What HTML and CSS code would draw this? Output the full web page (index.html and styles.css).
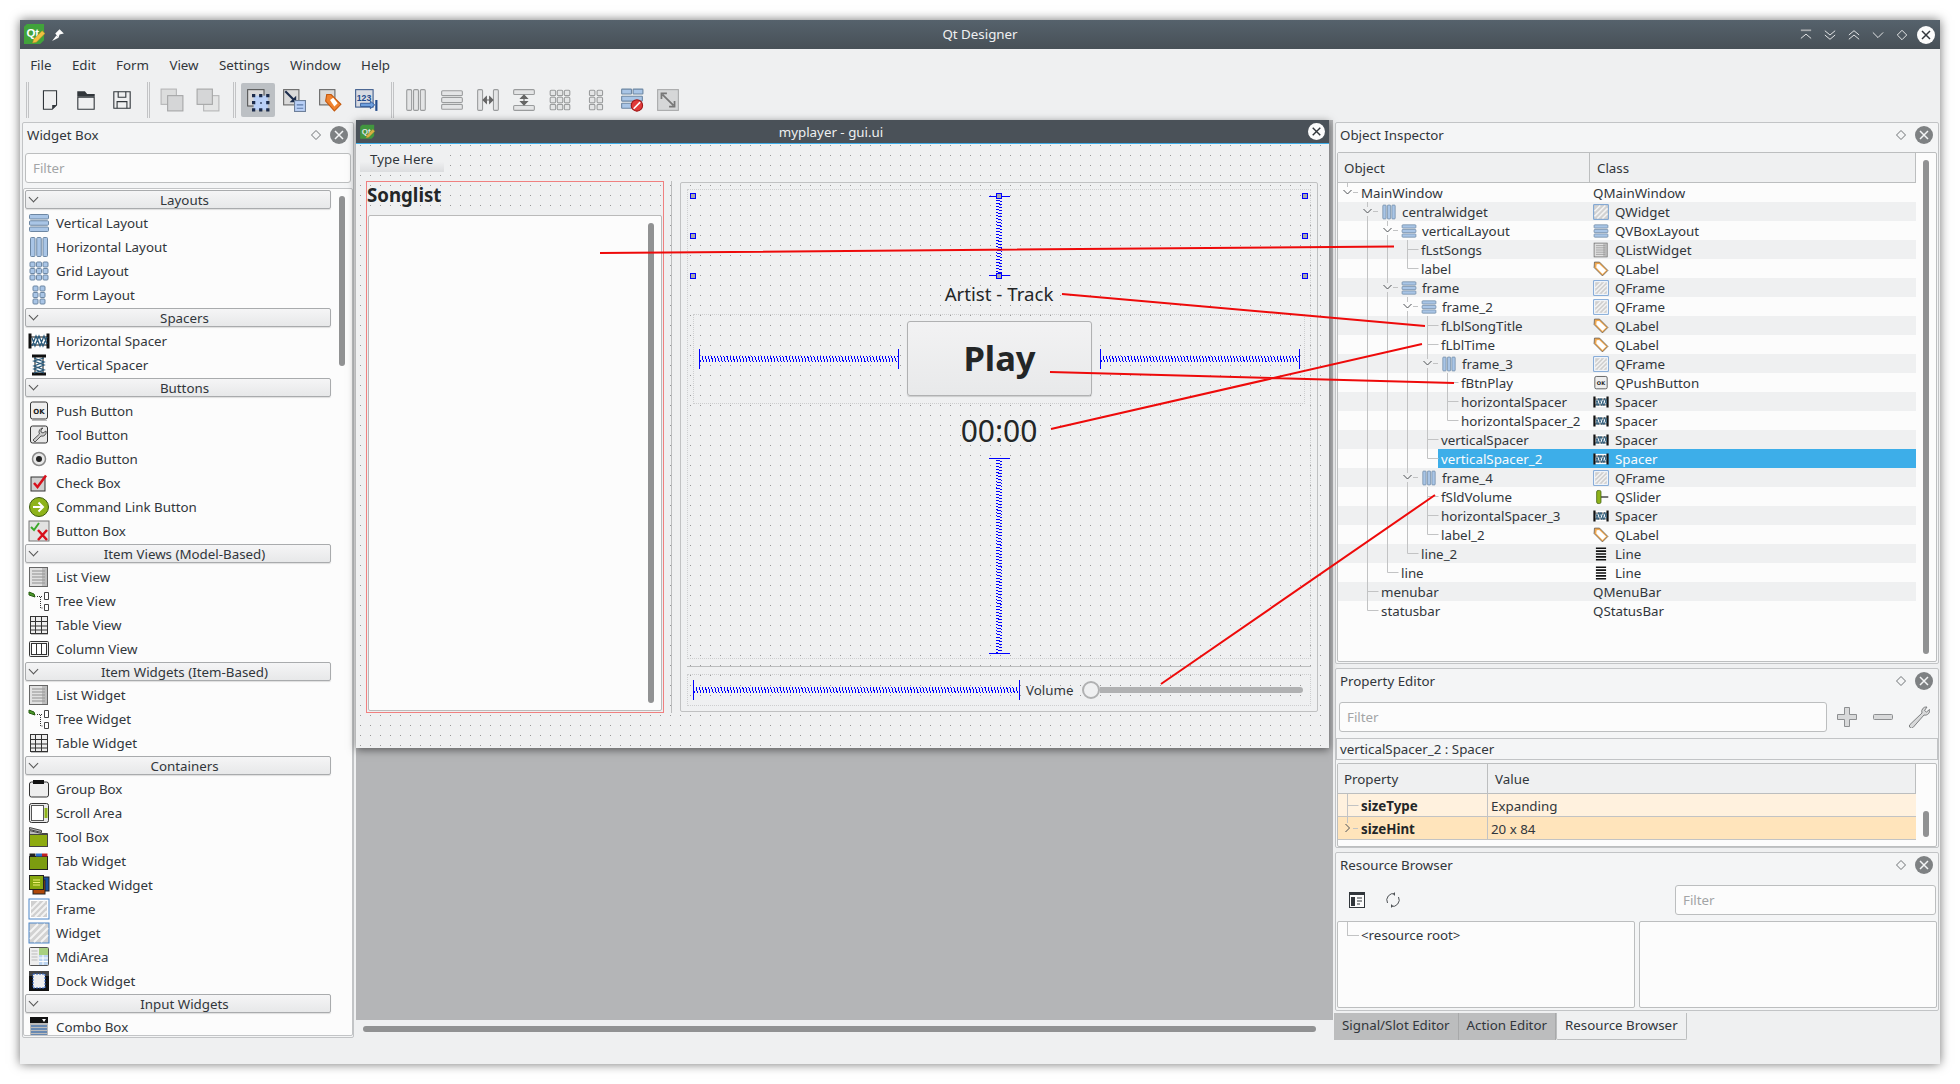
FILE: index.html
```html
<!DOCTYPE html>
<html lang="en">

<head>
    <meta charset="UTF-8">
    <title>Qt Designer</title>
    <link rel="stylesheet" href="styles.css">
</head>

<body>
    <svg class="defs" width="0" height="0">
        <symbol id="i-hbox" viewBox="0 0 22 22"><rect class="lay" x="2.5" y="1.5" width="4.5" height="19" rx="1"/><rect class="lay" x="8.75" y="1.5" width="4.5" height="19" rx="1"/><rect class="lay" x="15" y="1.5" width="4.5" height="19" rx="1"/></symbol>
        <symbol id="i-vbox" viewBox="0 0 22 22"><rect class="lay" x="1.5" y="2.5" width="19" height="4.5" rx="1"/><rect class="lay" x="1.5" y="8.75" width="19" height="4.5" rx="1"/><rect class="lay" x="1.5" y="15" width="19" height="4.5" rx="1"/></symbol>
        <symbol id="i-grid" viewBox="0 0 22 22"><rect class="lay" x="2" y="2" width="5" height="5" rx="1"/><rect class="lay" x="8.5" y="2" width="5" height="5" rx="1"/><rect class="lay" x="15" y="2" width="5" height="5" rx="1"/><rect class="lay" x="2" y="8.5" width="5" height="5" rx="1"/><rect class="lay" x="8.5" y="8.5" width="5" height="5" rx="1"/><rect class="lay" x="15" y="8.5" width="5" height="5" rx="1"/><rect class="lay" x="2" y="15" width="5" height="5" rx="1"/><rect class="lay" x="8.5" y="15" width="5" height="5" rx="1"/><rect class="lay" x="15" y="15" width="5" height="5" rx="1"/></symbol>
        <symbol id="i-form" viewBox="0 0 22 22"><rect class="lay" x="5" y="2" width="5" height="5" rx="1"/><rect class="lay" x="12" y="2" width="5" height="5" rx="1"/><rect class="lay" x="5" y="8.5" width="5" height="5" rx="1"/><rect class="lay" x="12" y="8.5" width="5" height="5" rx="1"/><rect class="lay" x="5" y="15" width="5" height="5" rx="1"/><rect class="lay" x="12" y="15" width="5" height="5" rx="1"/></symbol>
        <symbol id="i-hsplit" viewBox="0 0 22 22"><rect class="lay" x="1.5" y="1.5" width="4.5" height="19" rx="1"/><rect class="lay" x="16" y="1.5" width="4.5" height="19" rx="1"/><path d="M7 11h8M9.5 8l-3 3 3 3zM12.5 8l3 3-3 3z" fill="#666" stroke="#666"/></symbol>
        <symbol id="i-vsplit" viewBox="0 0 22 22"><rect class="lay" x="1.5" y="1.5" width="19" height="4.5" rx="1"/><rect class="lay" x="1.5" y="16" width="19" height="4.5" rx="1"/><path d="M11 7v8M8 9.5l3-3 3 3zM8 12.5l3 3 3-3z" fill="#666" stroke="#666"/></symbol>
        <symbol id="i-break" viewBox="0 0 22 22"><rect class="lay" x="1.5" y="1" width="9" height="4.5" rx=".5"/><rect class="lay" x="12" y="1" width="9" height="4.5" rx=".5"/><rect class="lay" x="1.5" y="7.5" width="19" height="4.5" rx=".5"/><rect class="lay" x="1.5" y="14" width="9" height="4.5" rx=".5"/><circle cx="15.5" cy="16" r="5.2" fill="#e03a3a" stroke="#a01818"/><path d="M12.5 19l6-6" stroke="#fff" stroke-width="1.5"/></symbol>
        <symbol id="i-adjust" viewBox="0 0 22 22"><rect x="1.5" y="1.5" width="19" height="19" fill="#d6d7d8" stroke="#a8a9aa"/><path d="M6 6l10 10M5 10V5h5M17 12v5h-5" fill="none" stroke="#777" stroke-width="1.6"/></symbol>
        <symbol id="i-new" viewBox="0 0 22 22"><path d="M5 2.5h12v13l-4 4H5z" fill="#eff0f1" stroke="#31363b"/><path d="M13 19.5v-4h4z" fill="#31363b"/></symbol>
        <symbol id="i-open" viewBox="0 0 22 22"><path d="M3.5 8.5h15v11h-15z" fill="#eff0f1" stroke="#31363b"/><path d="M3 3h7l2 2.500h7V8H3z" fill="#31363b"/></symbol>
        <symbol id="i-save" viewBox="0 0 22 22"><path d="M3.500 3.500h15v15h-15z" fill="none" stroke="#31363b"/><path d="M7.500 3.500v5h7v-5M6.500 18.500v-6h9v6" fill="none" stroke="#31363b"/></symbol>
        <symbol id="i-copy" viewBox="0 0 22 22"><rect x="1" y="1" width="14" height="14" fill="#dcdddd" stroke="#b5b6b7"/><rect x="7" y="7" width="14" height="14" fill="#d5d6d7" stroke="#a5a6a7"/></symbol>
        <symbol id="i-paste" viewBox="0 0 22 22"><rect x="7" y="7" width="14" height="14" fill="#e4e5e5" stroke="#b5b6b7"/><rect x="1" y="1" width="14" height="14" fill="#d5d6d7" stroke="#a5a6a7"/></symbol>
        <symbol id="i-widgets" viewBox="0 0 22 22"><rect x="1.500" y="1.500" width="15" height="15" fill="#dadada" stroke="#555"/><rect x="7" y="7" width="13" height="13" fill="#b9d0f7"/><path d="M5.500 5.500h3v3h-3zM12 5.500h3v3h-3zM18.500 5.500h3v3h-3zM5.500 12h3v3h-3zM18.500 12h3v3h-3zM5.500 18.500h3v3h-3zM12 18.500h3v3h-3zM18.500 18.500h3v3h-3zM13 13h1.500v1.500H13z" fill="#1c2c4c"/></symbol>
        <symbol id="i-signals" viewBox="0 0 22 22"><rect x="1.500" y="1.500" width="14" height="14" fill="#dadada" stroke="#666"/><path d="M3 3l8 8" stroke="#1c2c4c" stroke-width="2"/><path d="M13 7v6H7z" fill="#1c2c4c"/><rect x="11.500" y="11.500" width="10" height="10" fill="#b9d0f7" stroke="#6d7f99"/><path d="M13.500 15.500h6M13.500 18.500h6" stroke="#5d7aa8"/></symbol>
        <symbol id="i-buddy" viewBox="0 0 22 22"><rect x="1.500" y="1.500" width="14" height="14" fill="#dadada" stroke="#666"/><path d="M8 6h4l9 9-6 6-8-9z" fill="#f0822e" stroke="#c45a10"/><path d="M11 11l3-2 4 5-3 3z" fill="#fff"/></symbol>
        <symbol id="i-hspacer" viewBox="0 0 22 22"><rect x="1" y="4" width="20" height="14" fill="#fff"/><path d="M2 3.500v15M20 3.500v15" stroke="#111" stroke-width="3"/><path d="M3 7h16M3 15h16" stroke="#111" stroke-width="1"/><path d="M4 16l4-10 4 10 4-10 3 8M4 8l3 8 4-10 4 10 4-9" fill="none" stroke="#2a5a7a" stroke-width="1.300"/></symbol>
        <symbol id="i-vspacer" viewBox="0 0 22 22"><rect x="5" y="1" width="12" height="20" fill="#fff"/><path d="M4 2h14M4 20h14" stroke="#111" stroke-width="3"/><path d="M7 3v16M15 3v16" stroke="#111"/><path d="M6 4l10 4-10 4 10 4-10 3M16 4L6 7l10 4-10 4 10 4" fill="none" stroke="#2a5a7a" stroke-width="1.300"/></symbol>
        <symbol id="i-tool" viewBox="0 0 22 22"><rect x="2.500" y="2" width="17" height="17" rx="2" fill="#e8e8e8" stroke="#333"/><path d="M15 4a4 4 0 0 0-3.500 6L5 16l2 2 6-6a4 4 0 0 0 5-5l-3 2-2-1v-2z" fill="#ccc" stroke="#555"/></symbol>
        <symbol id="i-radio" viewBox="0 0 22 22"><circle cx="11" cy="11" r="6.500" fill="#e8e8e8" stroke="#888" stroke-width="1.500"/><circle cx="11" cy="11" r="3" fill="#222"/></symbol>
        <symbol id="i-check" viewBox="0 0 22 22"><rect x="3" y="5" width="14" height="14" fill="#d0d0d0" stroke="#333"/><path d="M6 11l3.500 4L18 3.500" fill="none" stroke="#d8101c" stroke-width="2.500"/></symbol>
        <symbol id="i-cmdlink" viewBox="0 0 22 22"><circle cx="11" cy="11" r="9.500" fill="#8eb31a" stroke="#3d5c0c"/><path d="M5 11h9M10.500 6.500l4.500 4.500-4.500 4.500" fill="none" stroke="#fff" stroke-width="2"/></symbol>
        <symbol id="i-boxbtn" viewBox="0 0 22 22"><rect x="1" y="1" width="20" height="20" fill="#e2e2e2" stroke="#777"/><path d="M3 7l3 3 5-7" fill="none" stroke="#3ba82a" stroke-width="2"/><path d="M10 10l9 10M19 10l-9 10" stroke="#d8101c" stroke-width="2.500"/></symbol>
        <symbol id="i-list" viewBox="0 0 22 22"><rect x="1.500" y="1.500" width="18" height="19" fill="#e0e0e0" stroke="#666"/><path d="M4 5h13M4 8h13M4 11h13M4 14h13M4 17h13" stroke="#909090"/><path d="M14 2v18h5V2z" fill="#999" opacity=".5"/></symbol>
        <symbol id="i-tree" viewBox="0 0 22 22"><path d="M1 2l5 2 1 3-6-2z" fill="#4c9a2a" stroke="#245a10"/><path d="M9 6.500h6M12.500 7v11h3" fill="none" stroke="#333" stroke-dasharray="1 1"/><path d="M16.500 2.500h4v7h-4zM16.500 14.500h4v6h-4z" fill="#fff" stroke="#444"/></symbol>
        <symbol id="i-table" viewBox="0 0 22 22"><rect x="2.500" y="2.500" width="17" height="17" fill="#eee" stroke="#333"/><path d="M2.500 7.500h17M2.500 12h17M2.500 16h17M7.500 2.500v17M13.500 2.500v17" stroke="#333"/><path d="M3 20.500h17" stroke="#bbb"/></symbol>
        <symbol id="i-column" viewBox="0 0 22 22"><rect x="1.500" y="3.500" width="19" height="15" rx="1" fill="#eee" stroke="#333"/><rect x="3.500" y="5.500" width="15" height="11" fill="#fff" stroke="#333"/><path d="M8.500 5.500v11M13.500 5.500v11" stroke="#333"/></symbol>
        <symbol id="i-group" viewBox="0 0 22 22"><rect x="1.500" y="4" width="19" height="15" rx="2" fill="#eee" stroke="#333"/><rect x="5" y="2" width="11" height="4" fill="#111"/></symbol>
        <symbol id="i-scroll" viewBox="0 0 22 22"><rect x="1.500" y="1.500" width="19" height="19" rx="2" fill="#e8e8e8" stroke="#333"/><rect x="3.500" y="3.500" width="12" height="15" fill="#fff" stroke="#555"/><path d="M18 6v10" stroke="#8eb31a" stroke-width="3"/></symbol>
        <symbol id="i-toolbox" viewBox="0 0 22 22"><path d="M1.500 1.500l12 3v2l-12-3z" fill="#bbb" stroke="#444"/><path d="M1.500 4.500l12 3h6v3h-18z" fill="#bbb" stroke="#444"/><rect x="1.500" y="8.500" width="18" height="12" fill="#8eab10" stroke="#444"/></symbol>
        <symbol id="i-tab" viewBox="0 0 22 22"><rect x="1.500" y="6.500" width="18" height="13" fill="#7c9c10" stroke="#222"/><path d="M1.500 3.500h6v3h-6z" fill="#222"/><path d="M8 3.500h6v3H8z" fill="#2a70c8"/><path d="M14 3.500h5.500v3H14z" fill="#c02020"/></symbol>
        <symbol id="i-stacked" viewBox="0 0 22 22"><rect x="10" y="3" width="11" height="14" fill="#1a50a0" stroke="#222"/><rect x="5" y="6" width="12" height="14" fill="#b04808" stroke="#222"/><rect x="1.500" y="1.500" width="14" height="14" fill="#86a810" stroke="#222"/><path d="M5 6h7M5 8.500h7M5 11h7" stroke="#eef070"/></symbol>
        <symbol id="i-frame" viewBox="0 0 22 22"><rect x="1" y="1" width="20" height="20" fill="#fff" stroke="#4d86c8" stroke-width="1"/><rect x="3" y="3" width="16" height="16" fill="#cfcfcf"/><path d="M3 11l8-8M3 17l14-14M7 19l12-12M13 19l6-6" stroke="#f2f2f2" stroke-width="2"/></symbol>
        <symbol id="i-widget" viewBox="0 0 22 22"><rect x="1" y="1" width="20" height="20" fill="#d2d2d2" stroke="#4d86c8" stroke-width="1"/><path d="M2 10l8-8M2 17l15-15M6 20l14-14M13 20l7-7" stroke="#f4f4f4" stroke-width="2"/></symbol>
        <symbol id="i-mdi" viewBox="0 0 22 22"><rect x="1.500" y="1.500" width="19" height="18" rx="1" fill="#eee" stroke="#555"/><rect x="11" y="2" width="9" height="7" fill="#a8d080"/><rect x="11" y="9" width="9" height="10" fill="#bcd4f0"/><path d="M11 12h9M11 15.500h9M15 9v10" stroke="#fff"/><path d="M3.500 5h6M3.500 8h6M3.500 11h6M3.500 14h6" stroke="#bbb"/></symbol>
        <symbol id="i-dock" viewBox="0 0 22 22"><rect x="1" y="1" width="20" height="20" fill="#111"/><rect x="1" y="1" width="20" height="5" fill="#444"/><rect x="5" y="4" width="12" height="14" fill="#eee" stroke="#2a60c0" stroke-dasharray="2 1"/></symbol>
        <symbol id="i-combo" viewBox="0 0 22 22"><rect x="2" y="1" width="18" height="21" fill="#bbb"/><rect x="2" y="1" width="18" height="6" fill="#111"/><path d="M14 3h4l-2 3z" fill="#fff"/><path d="M3 10h16M3 13h16M3 16h16M3 19h16" stroke="#4d7ab0" stroke-width="1.500"/></symbol>
        <symbol id="i-tag" viewBox="0 0 22 22"><path d="M2 1.500h7L20.500 13 13 20.500 1.500 9z" fill="#f0a850" stroke="#555"/><path d="M5 4.500l3.500-.5 9.500 9-5 5-8.500-9z" fill="#fff"/></symbol>
        <symbol id="i-slider" viewBox="0 0 22 22"><path d="M10 11h11" stroke="#444" stroke-width="2"/><rect x="5" y="2" width="6" height="18" rx="2" fill="#8eb31a" stroke="#3d5c0c"/></symbol>
        <symbol id="i-line" viewBox="0 0 22 22"><path d="M4 3h14M4 7h14M4 11h14M4 15h14M4 19h14" stroke="#111" stroke-width="2.200"/></symbol>
        <symbol id="i-wrench" viewBox="0 0 22 22"><path d="M19 1a4.500 4.500 0 0 0-5 6L2 18.500a2 2 0 0 0 3 3L16 9a4.500 4.500 0 0 0 5.500-5.500L18.500 6l-2-1.500z" fill="#d8d9da" stroke="#7d7f81"/></symbol>
        <symbol id="i-diamond" viewBox="0 0 12 12"><path d="M6 1.500L10.500 6 6 10.500 1.500 6z" fill="none" stroke="currentColor"/></symbol>
        <symbol id="i-close" viewBox="0 0 18 18"><circle cx="9" cy="9" r="9" fill="currentColor"/><path d="M5 5l8 8M13 5l-8 8" stroke="var(--x)" stroke-width="1.500"/></symbol>
    </svg>

    <div class="window">
        <div class="titlebar">
            <div class="tb-left">
                <svg class="qt-logo" viewBox="0 0 22 24"><path d="M3 1h18v17l-4 4H0V4z" fill="#41a33b"/><text class="ic-qt" x="2.500" y="14.500">Qt</text><path d="M9 21l1-4 9-9 3 3-9 9z" fill="#f0c040" stroke="#b08020" stroke-width=".5"/></svg>
                <svg class="pin" viewBox="0 0 14 14"><path d="M1 13l4-5 2 2zM4 6l4-4 4 4-4 1-1 3z" fill="#fcfcfc"/></svg>
            </div>
            <div class="tb-title">Qt Designer</div>
            <div class="tb-right">
                <svg class="wbtn" viewBox="0 0 14 14"><path d="M1 1.500h12" stroke="#a8abae" stroke-width="2"/><path d="M1 11l6-5 6 5" fill="none" stroke="#fcfcfc"/></svg>
                <svg class="wbtn" viewBox="0 0 14 14"><path d="M1 2l6 5 6-5M1 7l6 5 6-5" fill="none" stroke="#fcfcfc"/></svg>
                <svg class="wbtn" viewBox="0 0 14 14"><path d="M1 7l6-5 6 5M1 12l6-5 6 5" fill="none" stroke="#fcfcfc"/></svg>
                <svg class="wbtn" viewBox="0 0 14 14"><path d="M1 4l6 6 6-6" fill="none" stroke="#fcfcfc"/></svg>
                <svg class="wbtn" viewBox="0 0 14 14"><path d="M7 1.500L12.500 7 7 12.500 1.500 7z" fill="none" stroke="#fcfcfc"/></svg>
                <div class="wbtn-close"><svg class="close-white"><use href="#i-close"/></svg></div>
            </div>
        </div>

        <div class="menubar">
            <span>File</span><span>Edit</span><span>Form</span><span>View</span><span>Settings</span><span>Window</span><span>Help</span>
        </div>

        <div class="toolbar">
            <i class="tsep"></i>
            <div class="tbtn"><svg><use href="#i-new"/></svg></div>
            <div class="tbtn"><svg><use href="#i-open"/></svg></div>
            <div class="tbtn"><svg><use href="#i-save"/></svg></div>
            <i class="tsep"></i>
            <div class="tbtn"><svg><use href="#i-copy"/></svg></div>
            <div class="tbtn"><svg><use href="#i-paste"/></svg></div>
            <i class="tsep"></i>
            <div class="tbtn active"><svg><use href="#i-widgets"/></svg></div>
            <div class="tbtn"><svg><use href="#i-signals"/></svg></div>
            <div class="tbtn"><svg><use href="#i-buddy"/></svg></div>
            <div class="tbtn"><svg viewBox="0 0 22 22"><rect x="1.500" y="1.500" width="16" height="16" fill="#d8dbe2" stroke="#3e5c8c"/><text class="ic-text" x="2.500" y="11.500">123</text><path d="M6 14h9v-2l4 3.500-4 3.500v-2H6z" fill="#6fa0de" stroke="#234c8c" stroke-width=".7"/><path d="M20.500 11v10" stroke="#234c8c" stroke-width="2"/></svg></div>
            <i class="tsep"></i>
            <div class="tbtn grey"><svg><use href="#i-hbox"/></svg></div>
            <div class="tbtn grey"><svg><use href="#i-vbox"/></svg></div>
            <div class="tbtn grey"><svg><use href="#i-hsplit"/></svg></div>
            <div class="tbtn grey"><svg><use href="#i-vsplit"/></svg></div>
            <div class="tbtn grey"><svg><use href="#i-grid"/></svg></div>
            <div class="tbtn grey"><svg><use href="#i-form"/></svg></div>
            <div class="tbtn blue"><svg><use href="#i-break"/></svg></div>
            <div class="tbtn"><svg><use href="#i-adjust"/></svg></div>
        </div>

        <div class="main">
            <!-- Widget Box -->
            <div class="left-col">
                <div class="dock dock-widgets">
                    <div class="dock-title"><span>Widget Box</span><svg class="diamond"><use href="#i-diamond"/></svg><svg class="dock-close"><use href="#i-close"/></svg></div>
                    <input class="filter filter-box" placeholder="Filter">
                    <div class="toolbox">
                        <div class="toolbox-main">
                            <div class="tb-head">Layouts</div>
                            <div class="tb-group blue">
                                <div class="tb-item"><svg><use href="#i-vbox"/></svg>Vertical Layout</div>
                                <div class="tb-item"><svg><use href="#i-hbox"/></svg>Horizontal Layout</div>
                                <div class="tb-item"><svg><use href="#i-grid"/></svg>Grid Layout</div>
                                <div class="tb-item"><svg><use href="#i-form"/></svg>Form Layout</div>
                            </div>
                            <div class="tb-head">Spacers</div>
                            <div class="tb-group">
                                <div class="tb-item"><svg><use href="#i-hspacer"/></svg>Horizontal Spacer</div>
                                <div class="tb-item"><svg><use href="#i-vspacer"/></svg>Vertical Spacer</div>
                            </div>
                            <div class="tb-head">Buttons</div>
                            <div class="tb-group">
                                <div class="tb-item"><svg viewBox="0 0 22 22"><rect x="2.500" y="2" width="17" height="17" rx="2" fill="#eee" stroke="#333"/><path d="M4 20.500h15" stroke="#bbb"/><text class="ic-ok" x="11" y="13.500">OK</text></svg>Push Button</div>
                                <div class="tb-item"><svg><use href="#i-tool"/></svg>Tool Button</div>
                                <div class="tb-item"><svg><use href="#i-radio"/></svg>Radio Button</div>
                                <div class="tb-item"><svg><use href="#i-check"/></svg>Check Box</div>
                                <div class="tb-item"><svg><use href="#i-cmdlink"/></svg>Command Link Button</div>
                                <div class="tb-item"><svg><use href="#i-boxbtn"/></svg>Button Box</div>
                            </div>
                            <div class="tb-head">Item Views (Model-Based)</div>
                            <div class="tb-group">
                                <div class="tb-item"><svg><use href="#i-list"/></svg>List View</div>
                                <div class="tb-item"><svg><use href="#i-tree"/></svg>Tree View</div>
                                <div class="tb-item"><svg><use href="#i-table"/></svg>Table View</div>
                                <div class="tb-item"><svg><use href="#i-column"/></svg>Column View</div>
                            </div>
                            <div class="tb-head">Item Widgets (Item-Based)</div>
                            <div class="tb-group">
                                <div class="tb-item"><svg><use href="#i-list"/></svg>List Widget</div>
                                <div class="tb-item"><svg><use href="#i-tree"/></svg>Tree Widget</div>
                                <div class="tb-item"><svg><use href="#i-table"/></svg>Table Widget</div>
                            </div>
                            <div class="tb-head">Containers</div>
                            <div class="tb-group">
                                <div class="tb-item"><svg><use href="#i-group"/></svg>Group Box</div>
                                <div class="tb-item"><svg><use href="#i-scroll"/></svg>Scroll Area</div>
                                <div class="tb-item"><svg><use href="#i-toolbox"/></svg>Tool Box</div>
                                <div class="tb-item"><svg><use href="#i-tab"/></svg>Tab Widget</div>
                                <div class="tb-item"><svg><use href="#i-stacked"/></svg>Stacked Widget</div>
                                <div class="tb-item"><svg><use href="#i-frame"/></svg>Frame</div>
                                <div class="tb-item"><svg><use href="#i-widget"/></svg>Widget</div>
                                <div class="tb-item"><svg><use href="#i-mdi"/></svg>MdiArea</div>
                                <div class="tb-item"><svg><use href="#i-dock"/></svg>Dock Widget</div>
                            </div>
                            <div class="tb-head">Input Widgets</div>
                            <div class="tb-group">
                                <div class="tb-item"><svg><use href="#i-combo"/></svg>Combo Box</div>
                            </div>
                        </div>
                        <div class="toolbox-scroll"></div>
                    </div>
                </div>
            </div>

            <!-- MDI area with the form -->
            <div class="mdi">
                <div class="desk">
                    <div class="form-win">
                        <div class="form-title">
                            <svg class="form-logo" viewBox="0 0 22 24"><path d="M3 1h18v17l-4 4H0V4z" fill="#41a33b"/><text class="ic-qt" x="2.500" y="14.500">Qt</text><path d="M9 21l1-4 9-9 3 3-9 9z" fill="#f0c040" stroke="#b08020" stroke-width=".5"/></svg>
                            <span>myplayer - gui.ui</span>
                            <svg class="form-close close-white"><use href="#i-close"/></svg>
                        </div>
                        <div class="form-body">
                            <div class="form-menu">Type Here</div>
                            <div class="central">
                                <div class="songs">
                                    <div class="songs-label">Songlist</div>
                                    <div class="songs-list"><div class="songs-scroll"></div></div>
                                </div>
                                <div class="vline"></div>
                                <div class="player">
                                    <div class="frame2">
                                        <div class="selected">
                                            <div class="vspacer"></div>
                                            <i class="handle h-tl"></i><i class="handle h-tc"></i><i class="handle h-tr"></i>
                                            <i class="handle h-ml"></i><i class="handle h-mr"></i>
                                            <i class="handle h-bl"></i><i class="handle h-bc"></i><i class="handle h-br"></i>
                                        </div>
                                        <div class="song-title">Artist - Track</div>
                                        <div class="frame3">
                                            <div class="hspacer"></div>
                                            <div class="play-btn">Play</div>
                                            <div class="hspacer"></div>
                                        </div>
                                        <div class="song-time">00:00</div>
                                        <div class="vspacer vspacer-big"></div>
                                    </div>
                                    <div class="hline"></div>
                                    <div class="frame4">
                                        <div class="hspacer hspacer-vol"></div>
                                        <div class="vol-label">Volume</div>
                                        <div class="slider"><i class="slider-handle"></i><i class="slider-groove"></i></div>
                                    </div>
                                </div>
                            </div>
                        </div>
                    </div>
                </div>
                <div class="mdi-scroll"><i></i></div>
            </div>

            <!-- Right docks -->
            <div class="right-col">
                <div class="dock dock-inspector">
                    <div class="dock-title"><span>Object Inspector</span><svg class="diamond"><use href="#i-diamond"/></svg><svg class="dock-close"><use href="#i-close"/></svg></div>
                    <div class="tree tree-objects">
                        <div class="tree-main">
                            <div class="tree-head"><div class="th-obj">Object</div><div class="th-class">Class</div></div>
                            <div class="tree-body">
                                <div class="row"><div class="c-obj lv0">MainWindow</div><div class="c-class">QMainWindow</div></div>
                                <div class="row"><div class="c-obj lv1 blue"><svg><use href="#i-hbox"/></svg>centralwidget</div><div class="c-class"><svg><use href="#i-widget"/></svg>QWidget</div></div>
                                <div class="row"><div class="c-obj lv2 blue"><svg><use href="#i-vbox"/></svg>verticalLayout</div><div class="c-class blue"><svg><use href="#i-vbox"/></svg>QVBoxLayout</div></div>
                                <div class="row"><div class="c-obj lv3">fLstSongs</div><div class="c-class"><svg><use href="#i-list"/></svg>QListWidget</div></div>
                                <div class="row"><div class="c-obj lv3">label</div><div class="c-class"><svg><use href="#i-tag"/></svg>QLabel</div></div>
                                <div class="row"><div class="c-obj lv2 blue"><svg><use href="#i-vbox"/></svg>frame</div><div class="c-class"><svg><use href="#i-frame"/></svg>QFrame</div></div>
                                <div class="row"><div class="c-obj lv3 blue"><svg><use href="#i-vbox"/></svg>frame_2</div><div class="c-class"><svg><use href="#i-frame"/></svg>QFrame</div></div>
                                <div class="row"><div class="c-obj lv4">fLblSongTitle</div><div class="c-class"><svg><use href="#i-tag"/></svg>QLabel</div></div>
                                <div class="row"><div class="c-obj lv4">fLblTime</div><div class="c-class"><svg><use href="#i-tag"/></svg>QLabel</div></div>
                                <div class="row"><div class="c-obj lv4 blue"><svg><use href="#i-hbox"/></svg>frame_3</div><div class="c-class"><svg><use href="#i-frame"/></svg>QFrame</div></div>
                                <div class="row"><div class="c-obj lv5">fBtnPlay</div><div class="c-class"><svg viewBox="0 0 22 22"><rect x="2.500" y="2" width="17" height="17" rx="2" fill="#eee" stroke="#333"/><text class="ic-ok" x="11" y="13.500">OK</text></svg>QPushButton</div></div>
                                <div class="row"><div class="c-obj lv5">horizontalSpacer</div><div class="c-class"><svg><use href="#i-hspacer"/></svg>Spacer</div></div>
                                <div class="row"><div class="c-obj lv5">horizontalSpacer_2</div><div class="c-class"><svg><use href="#i-hspacer"/></svg>Spacer</div></div>
                                <div class="row"><div class="c-obj lv4">verticalSpacer</div><div class="c-class"><svg><use href="#i-hspacer"/></svg>Spacer</div></div>
                                <div class="row row-sel"><div class="c-obj lv4">verticalSpacer_2</div><div class="c-class"><svg><use href="#i-hspacer"/></svg>Spacer</div></div>
                                <div class="row"><div class="c-obj lv3 blue"><svg><use href="#i-hbox"/></svg>frame_4</div><div class="c-class"><svg><use href="#i-frame"/></svg>QFrame</div></div>
                                <div class="row"><div class="c-obj lv4">fSldVolume</div><div class="c-class"><svg><use href="#i-slider"/></svg>QSlider</div></div>
                                <div class="row"><div class="c-obj lv4">horizontalSpacer_3</div><div class="c-class"><svg><use href="#i-hspacer"/></svg>Spacer</div></div>
                                <div class="row"><div class="c-obj lv4">label_2</div><div class="c-class"><svg><use href="#i-tag"/></svg>QLabel</div></div>
                                <div class="row"><div class="c-obj lv3">line_2</div><div class="c-class"><svg><use href="#i-line"/></svg>Line</div></div>
                                <div class="row"><div class="c-obj lv2">line</div><div class="c-class"><svg><use href="#i-line"/></svg>Line</div></div>
                                <div class="row"><div class="c-obj lv1">menubar</div><div class="c-class">QMenuBar</div></div>
                                <div class="row"><div class="c-obj lv1">statusbar</div><div class="c-class">QStatusBar</div></div>
                                <svg class="tree-guides" viewBox="1338 183 578 437">
                                    <path class="guide" d="M1347.500 183v4M1367.500 202v5M1367.500 216v394.500h11M1367.500 591.500h11M1387.500 221v5M1387.500 235v48M1387.500 292v280.500h11M1407.500 240v28.500h11M1407.500 249.500h11M1407.500 297v5M1407.500 311v162M1407.500 482v71.500h11M1427.500 316v43M1427.500 368v90.500h11M1427.500 325.500h11M1427.500 344.500h11M1427.500 439.500h11M1427.500 487v47.500h11M1427.500 496.500h11M1427.500 515.500h11M1447.500 373v47.500h11M1447.500 382.500h11M1447.500 401.500h11"/>
                                    <path class="guide" d="M1353 192.500h5M1373 211.500h5M1393 230.500h5M1393 287.500h5M1413 306.500h5M1433 363.500h5M1413 477.500h5"/>
                                    <path class="chev" d="M1343.500 190l4 4 4-4M1363.500 209l4 4 4-4M1383.500 228l4 4 4-4M1383.500 285l4 4 4-4M1403.500 304l4 4 4-4M1423.500 361l4 4 4-4M1403.500 475l4 4 4-4"/>
                                </svg>
                            </div>
                        </div>
                        <div class="tree-scroll"><i></i></div>
                    </div>
                </div>

                <div class="dock dock-props">
                    <div class="dock-title"><span>Property Editor</span><svg class="diamond"><use href="#i-diamond"/></svg><svg class="dock-close"><use href="#i-close"/></svg></div>
                    <div class="prop-filter">
                        <input class="filter" placeholder="Filter">
                        <svg class="prop-icon" viewBox="0 0 22 22"><path d="M8.500 1.500h5v7h7v5h-7v7h-5v-7h-7v-5h7z" fill="#d8d9da" stroke="#8d8f91"/></svg>
                        <svg class="prop-icon" viewBox="0 0 22 22"><rect x="1.500" y="8.500" width="19" height="5" rx="1" fill="#d8d9da" stroke="#8d8f91"/></svg>
                        <svg class="prop-icon"><use href="#i-wrench"/></svg>
                    </div>
                    <div class="prop-class">verticalSpacer_2 : Spacer</div>
                    <div class="tree tree-props">
                        <div class="tree-main">
                            <div class="tree-head"><div class="th-prop">Property</div><div class="th-class">Value</div></div>
                            <div class="prop-body">
                                <div class="prop-row light"><div class="p-name">sizeType</div><div class="p-val">Expanding</div></div>
                                <div class="prop-row dark"><div class="p-name">sizeHint</div><div class="p-val">20 x 84</div></div>
                                <svg class="tree-guides" viewBox="1338 794 578 46">
                                    <path class="guide" d="M1347.500 794v29M1347.500 805.500h11M1353 828.500h5"/>
                                    <path class="chev" d="M1345.500 824l4 4-4 4"/>
                                </svg>
                            </div>
                        </div>
                        <div class="tree-scroll"><i></i></div>
                    </div>
                </div>

                <div class="dock dock-res">
                    <div class="dock-title"><span>Resource Browser</span><svg class="diamond"><use href="#i-diamond"/></svg><svg class="dock-close"><use href="#i-close"/></svg></div>
                    <div class="res-bar">
                        <svg class="res-icon" viewBox="0 0 18 18"><rect x="1.500" y="1.500" width="15" height="15" fill="#fcfcfc" stroke="#31363b"/><rect x="1" y="1" width="16" height="3" fill="#31363b"/><rect x="3" y="6" width="4" height="9" fill="#31363b"/><path d="M9 7h5M9 10h5M9 13h3" stroke="#31363b"/></svg>
                        <svg class="res-icon" viewBox="0 0 18 18"><path d="M3.500 12A6.500 6.500 0 0 1 11 2.800M14.500 6A6.500 6.500 0 0 1 7 15.200" fill="none" stroke="#4d5155"/><path d="M11 1v4l-2-2zM7 17v-4l2 2z" fill="#4d5155"/></svg>
                        <input class="filter" placeholder="Filter">
                    </div>
                    <div class="res-panels">
                        <div class="res-panel res-tree">&lt;resource root&gt;</div>
                        <div class="res-panel"></div>
                    </div>
                </div>

                <div class="tabs">
                    <div class="tab">Signal/Slot Editor</div>
                    <div class="tab">Action Editor</div>
                    <div class="tab tab-on">Resource Browser</div>
                </div>
            </div>
        </div>
    </div>

    <!-- red annotation lines drawn over the screenshot -->
    <svg class="annotations" viewBox="0 0 1960 1084">
        <path d="M600 253L1394 246.500M1062 294L1425 326M1050 372L1454 383M1051 429L1422 344M1161 684L1435 495"/>
    </svg>
</body>

</html>
```

FILE: styles.css
```css
* {
    box-sizing: border-box;
}

html,
body {
    margin: 0;
    height: 100%;
    background: #fff;
}

body {
    position: relative;
    padding: 20px;
    font: 13.33px "Noto Sans", sans-serif;
    color: #31363b;
    overflow: hidden;
}

.defs {
    position: absolute;
}

.lay {
    fill: var(--lf, #e4e5e6);
    stroke: var(--ls, #9a9c9d);
}

.blue {
    --lf: #a9c5e6;
    --ls: #6d87a3;
}

.grey {
    --lf: #e4e5e6;
    --ls: #9a9c9d;
}

.ic-text {
    font: bold 8px "Liberation Sans", sans-serif;
    fill: #234c8c;
}

.ic-ok {
    font: bold 7px "DejaVu Sans", sans-serif;
    fill: #222;
    text-anchor: middle;
}

.ic-qt {
    font: bold 12px "Liberation Sans", sans-serif;
    fill: #fff;
}

.window {
    width: 1920px;
    height: 1044px;
    display: flex;
    flex-direction: column;
    background: #eff0f1;
    box-shadow: 0 0 10px rgba(0, 0, 0, .55);
}

/* title bar */
.titlebar {
    height: 29px;
    flex: none;
    display: grid;
    grid-template-columns: 1fr auto 1fr;
    align-items: center;
    background: linear-gradient(#56626c, #475057);
    color: #eff0f1;
}

.tb-title {
    padding-bottom: 1px;
}

.tb-left {
    display: flex;
    align-items: center;
    padding-left: 4px;
}

.qt-logo {
    width: 21px;
    height: 23px;
}

.pin {
    width: 15px;
    height: 15px;
    margin-left: 6px;
}

.tb-right {
    display: flex;
    align-items: center;
    justify-content: flex-end;
    padding-right: 2px;
}

.wbtn {
    width: 12px;
    height: 12px;
    margin: 0 6px;
}

.wbtn-close {
    width: 24px;
    display: flex;
    justify-content: center;
}

.close-white {
    width: 18px;
    height: 18px;
    color: #fcfcfc;
    --x: #31363b;
}

/* menu and toolbar */
.menubar {
    height: 31px;
    flex: none;
    display: flex;
    align-items: center;
}

.menubar span {
    padding: 0 10.2px;
}

.toolbar {
    height: 40px;
    flex: none;
    display: flex;
    align-items: center;
}

.tsep {
    width: 3px;
    height: 36px;
    margin: 0 4px 0 7px;
    border-left: 1px solid #c2c3c5;
    border-right: 1px solid #c2c3c5;
}

.tsep:first-child {
    margin-left: 6px;
    margin-right: 3px;
}

.tbtn {
    width: 34px;
    height: 34px;
    margin: 0 1px;
    display: flex;
    align-items: center;
    justify-content: center;
    border-radius: 2px;
}

.tbtn svg {
    width: 24px;
    height: 24px;
}

.tbtn.active {
    background: #bcc0c4;
}

/* main area */
.main {
    flex: 1;
    min-height: 0;
    display: flex;
}

.left-col {
    width: 332px;
    flex: none;
    margin: 2px 0 26px 2px;
    display: flex;
}

.dock {
    background: #f4f5f6;
    border: 1px solid #c2c4c6;
    border-radius: 2px;
}

.dock-widgets {
    flex: 1;
    min-width: 0;
    padding: 0 1px 1px;
    display: flex;
    flex-direction: column;
}

.dock-title {
    height: 29px;
    flex: none;
    display: flex;
    align-items: center;
    padding: 0 0 5px 3px;
}

.dock-title span {
    flex: 1;
}

.diamond {
    width: 12px;
    height: 12px;
    margin-right: 8px;
    color: #6f7376;
}

.dock-close {
    width: 18px;
    height: 18px;
    margin-right: 4px;
    color: #7e8183;
    --x: #f4f5f6;
}

.filter {
    height: 30px;
    flex: none;
    font: 13.33px "Noto Sans", sans-serif;
    padding: 0 7px;
    background: #fcfcfc;
    border: 1px solid #bcbebf;
    border-radius: 3px;
    outline: none;
    color: #31363b;
}

.filter::placeholder {
    color: #a3a5a7;
}

.filter-box {
    margin: 1px 1px 5px 1px;
}

.toolbox {
    flex: 1;
    min-height: 0;
    display: flex;
    background: #fcfcfc;
    border: 1px solid #c2c4c6;
    border-radius: 2px;
    margin: 0 -1px;
    overflow: hidden;
}

.toolbox-main {
    width: 306px;
    flex: none;
    margin-left: 1px;
    padding-top: 1px;
}

.toolbox-scroll {
    width: 6px;
    height: 170px;
    margin: 7px 0 0 8px;
    background: #919293;
    border-radius: 3px;
}

.tb-head {
    height: 19px;
    padding-left: 13px;
    line-height: 18px;
    text-align: center;
    background: linear-gradient(#f5f5f6, #e7e8e9);
    border: 1px solid #a9abad;
    border-radius: 2px;
    box-shadow: 0 1px 1px rgba(0, 0, 0, .12);
    position: relative;
}

.tb-head::before {
    content: "";
    position: absolute;
    left: 4px;
    top: 3px;
    width: 6px;
    height: 6px;
    border-right: 1px solid #555;
    border-bottom: 1px solid #555;
    transform: rotate(45deg);
}

.tb-group {
    margin: 2px 0 1px;
}

.tb-item {
    height: 24px;
    display: flex;
    align-items: center;
    padding-left: 3px;
    white-space: nowrap;
}

.tb-item svg {
    width: 22px;
    height: 22px;
    flex: none;
    margin-right: 6px;
}

/* MDI and form */
.mdi {
    width: 977px;
    flex: none;
    margin: 0 1px 0 2px;
    display: flex;
    flex-direction: column;
}

.desk {
    height: 900px;
    flex: none;
    background: #b4b5b7;
}

.mdi-scroll {
    padding: 6px 17px 0 7px;
}

.mdi-scroll i {
    display: block;
    height: 6px;
    background: #919293;
    border-radius: 3px;
}

.form-win {
    width: 973px;
    height: 628px;
    display: flex;
    flex-direction: column;
    background: #eff0f1;
    box-shadow: 0 2px 8px rgba(0, 0, 0, .5);
}

.form-title {
    height: 24px;
    flex: none;
    position: relative;
    display: flex;
    align-items: center;
    justify-content: center;
    padding-right: 23px;
    background: #4a5158;
    border-bottom: 1px solid #3daee9;
    color: #eff0f1;
}

.form-logo {
    position: absolute;
    left: 4px;
    top: 4px;
    width: 15px;
    height: 16px;
    opacity: .85;
}

.form-close {
    position: absolute;
    right: 4px;
    top: 3px;
    width: 17px;
    height: 17px;
}

.form-body {
    flex: 1;
    min-height: 0;
    padding: 2px 0 0 4px;
    background-image: radial-gradient(circle at .5px .5px, #999 .7px, transparent .7px);
    background-size: 10px 10px;
    background-position: 4px 1px;
}

.form-menu {
    width: 84px;
    height: 26px;
    padding-left: 10px;
    line-height: 26px;
    background: linear-gradient(#eff0f1 60%, #dcdddf);
}

.central {
    display: flex;
    margin: 9px 0 0 6px;
    height: 532px;
}

.songs {
    width: 298px;
    flex: none;
    border: 1px solid #f08080;
    display: flex;
    flex-direction: column;
}

.songs-label {
    height: 33px;
    flex: none;
    font-size: 18.67px;
    font-weight: bold;
    line-height: 26px;
    color: #232627;
}

.songs-list {
    flex: 1;
    margin: 0 1px 1px;
    padding: 7px;
    background: #fcfcfc;
    border: 1px solid #bababa;
    border-radius: 2px;
    display: flex;
    justify-content: flex-end;
}

.songs-scroll {
    width: 6px;
    background: #919293;
    border-radius: 3px;
}

.vline {
    width: 1px;
    flex: none;
    margin: 0 8px 0 7px;
    background: #bcbdbe;
}

.player {
    width: 638px;
    flex: none;
    margin-top: 1px;
    height: 530px;
    padding: 6px;
    border: 1px solid #c0c1c2;
    border-radius: 2px;
}

.frame2 {
    height: 470px;
    padding: 6px 5px 0;
    border: 1px dotted #cdcecf;
}

.selected {
    height: 80px;
    position: relative;
    display: flex;
    justify-content: center;
}

.vspacer {
    width: 21px;
    height: 80px;
    border-top: 1px solid #0000ff;
    border-bottom: 1px solid #0000ff;
    background: repeating-linear-gradient(15deg, #0000ff 0 1px, transparent 1px 3px) center / 6px 100% no-repeat;
}

.vspacer-big {
    height: 196px;
    margin: 0 auto;
}

.handle {
    position: absolute;
    width: 6px;
    height: 6px;
    border: 1px solid #0000ff;
    background: #a8a9aa;
}

.h-tl { left: -3px; top: -3px; }
.h-tc { left: 303px; top: -3px; }
.h-tr { right: -3px; top: -3px; }
.h-ml { left: -3px; top: 37px; }
.h-mr { right: -3px; top: 37px; }
.h-bl { left: -3px; bottom: -3px; }
.h-bc { left: 303px; bottom: -3px; }
.h-br { right: -3px; bottom: -3px; }

.song-title {
    height: 38px;
    font-size: 18.67px;
    line-height: 36px;
    text-align: center;
    color: #232627;
}

.frame3 {
    height: 90px;
    display: flex;
    align-items: center;
    padding: 0 5px;
    gap: 8px;
    border: 1px dotted #cdcecf;
}

.hspacer {
    width: 200px;
    height: 20px;
    flex: none;
    border-left: 1px solid #0000ff;
    border-right: 1px solid #0000ff;
    background: repeating-linear-gradient(75deg, #0000ff 0 1px, transparent 1px 3px) center / 100% 6px no-repeat;
}

.play-btn {
    width: 185px;
    height: 75px;
    flex: none;
    margin-top: -2px;
    font-size: 34.6px;
    font-weight: bold;
    line-height: 72px;
    text-align: center;
    color: #232627;
    background: linear-gradient(#f2f2f3, #e8e9ea);
    border: 1px solid #b0b1b2;
    border-radius: 3px;
    box-shadow: 0 1px 1px rgba(0, 0, 0, .15);
}

.song-time {
    height: 54px;
    font-size: 30px;
    line-height: 53px;
    text-align: center;
    color: #232627;
}

.hline {
    height: 1px;
    margin: 7px 0;
    background: #bcbdbe;
}

.frame4 {
    height: 32px;
    display: flex;
    align-items: center;
    padding-left: 5px;
    border: 1px dotted #cdcecf;
}

.hspacer-vol {
    width: 327px;
}

.vol-label {
    margin-left: 6px;
    width: 48px;
    white-space: nowrap;
}

.slider {
    margin-left: 8px;
    display: flex;
    align-items: center;
}

.slider-handle {
    width: 18px;
    height: 18px;
    flex: none;
    border: 2px solid #b0b1b2;
    border-radius: 50%;
    background: #eff0f1;
}

.slider-groove {
    width: 203px;
    height: 6px;
    background: #b0b1b2;
    border-radius: 0 3px 3px 0;
}

/* right docks */
.right-col {
    width: 606px;
    flex: none;
    padding: 2px 1px 0;
}

.dock-inspector {
    height: 542px;
    padding: 0 1px;
    margin-bottom: 4px;
    display: flex;
    flex-direction: column;
}

.dock-props {
    height: 180px;
    padding: 0 1px;
    margin-bottom: 4px;
}

.dock-res {
    height: 159px;
    padding: 0 1px;
}

.tree {
    display: flex;
    background: #fcfcfc;
    border: 1px solid #bcbebf;
    border-radius: 2px;
}

.tree-objects {
    flex: 1;
    margin-bottom: 1px;
}

.tree-main {
    width: 578px;
    flex: none;
}

.tree-head {
    height: 30px;
    display: flex;
    background: #eff0f1;
    border-bottom: 1px solid #bcbebf;
}

.tree-head > div {
    padding: 6px 0 0 6px;
    border-right: 1px solid #bcbebf;
}

.th-obj {
    width: 252px;
}

.th-prop {
    width: 150px;
}

.tree-head .th-class {
    flex: 1;
    padding-left: 7px;
}

.tree-body,
.prop-body {
    position: relative;
}

.row {
    height: 19px;
    display: flex;
    align-items: center;
    white-space: nowrap;
}

.row:nth-child(even) {
    background: #eff0f1;
}

.row-sel {
    background: linear-gradient(to right, transparent 100px, #3daee9 100px);
    color: #fcfcfc;
}

.c-obj {
    width: 252px;
    flex: none;
    display: flex;
    align-items: center;
}

.c-class {
    flex: 1;
    display: flex;
    align-items: center;
    padding-left: 3px;
}

.c-obj svg {
    width: 16px;
    height: 16px;
    margin: 0 5px 0 0;
}

.c-class svg {
    width: 16px;
    height: 16px;
    margin-right: 6px;
}

.lv0 { padding-left: 23px; }
.lv1 { padding-left: 43px; }
.lv2 { padding-left: 63px; }
.lv3 { padding-left: 83px; }
.lv4 { padding-left: 103px; }
.lv5 { padding-left: 123px; }

.tree-guides {
    position: absolute;
    left: 0;
    top: 0;
    width: 100%;
    height: 100%;
}

.guide {
    fill: none;
    stroke: #c2c3c4;
}

.chev {
    fill: none;
    stroke: #4d5155;
}

.tree-scroll {
    flex: 1;
    display: flex;
    justify-content: center;
    padding: 7px 0;
}

.tree-scroll i {
    width: 6px;
    background: #919293;
    border-radius: 3px;
}

.prop-filter {
    display: flex;
    align-items: center;
    height: 32px;
    margin: 3px 0 5px 2px;
}

.prop-filter .filter {
    width: 488px;
    margin-right: 9px;
}

.prop-icon {
    width: 22px;
    height: 22px;
    flex: none;
    margin-right: 14px;
}

.prop-class {
    height: 22px;
    margin: 0 -1px 3px;
    padding-left: 3px;
    line-height: 21px;
    background: #f4f5f6;
    border: 1px solid #c2c4c6;
}

.tree-props {
    height: 84px;
}

.tree-props .tree-scroll {
    align-items: stretch;
    padding: 47px 0 9px;
}

.prop-row {
    height: 23px;
    display: flex;
    align-items: center;
    border-bottom: 1px solid #c2c3c4;
}

.light {
    background: #fff1de;
}

.dark {
    background: #ffe4bb;
}

.p-name {
    width: 150px;
    height: 100%;
    padding-left: 23px;
    font-weight: bold;
    line-height: 25px;
    color: #232627;
    border-right: 1px solid #c2c3c4;
}

.p-val {
    padding: 2px 0 0 3px;
}

.res-bar {
    height: 34px;
    display: flex;
    align-items: center;
    margin: 1px 0 4px;
    padding-left: 11px;
}

.res-icon {
    width: 18px;
    height: 18px;
    margin-right: 18px;
}

.res-bar .filter {
    width: 261px;
    margin-left: auto;
    margin-right: 1px;
}

.res-panels {
    display: flex;
    gap: 4px;
    height: 87px;
}

.res-panel {
    flex: 1;
    background: #fcfcfc;
    border: 1px solid #bcbebf;
    border-radius: 2px;
}

.res-tree {
    width: 298px;
    flex: none;
    padding: 4px 0 0 23px;
    position: relative;
}

.res-tree::before {
    content: "";
    position: absolute;
    left: 9px;
    top: 0;
    width: 11px;
    height: 13px;
    border-left: 1px solid #c2c3c4;
    border-bottom: 1px solid #c2c3c4;
}

.tabs {
    display: flex;
    height: 27px;
    margin: 2px 0 0 -1px;
}

.tab {
    padding: 3px 8px 0;
    background: #bcbdbe;
    border-right: 1px solid #a8a9aa;
}

.tab-on {
    background: #eff0f1;
    border: 1px solid #bcbebf;
    border-top: 0;
    border-radius: 0 0 2px 2px;
}

/* annotations */
.annotations {
    position: absolute;
    left: 0;
    top: 0;
    width: 1960px;
    height: 1084px;
    pointer-events: none;
}

.annotations path {
    fill: none;
    stroke: #ee0a0a;
    stroke-width: 2;
}
```
